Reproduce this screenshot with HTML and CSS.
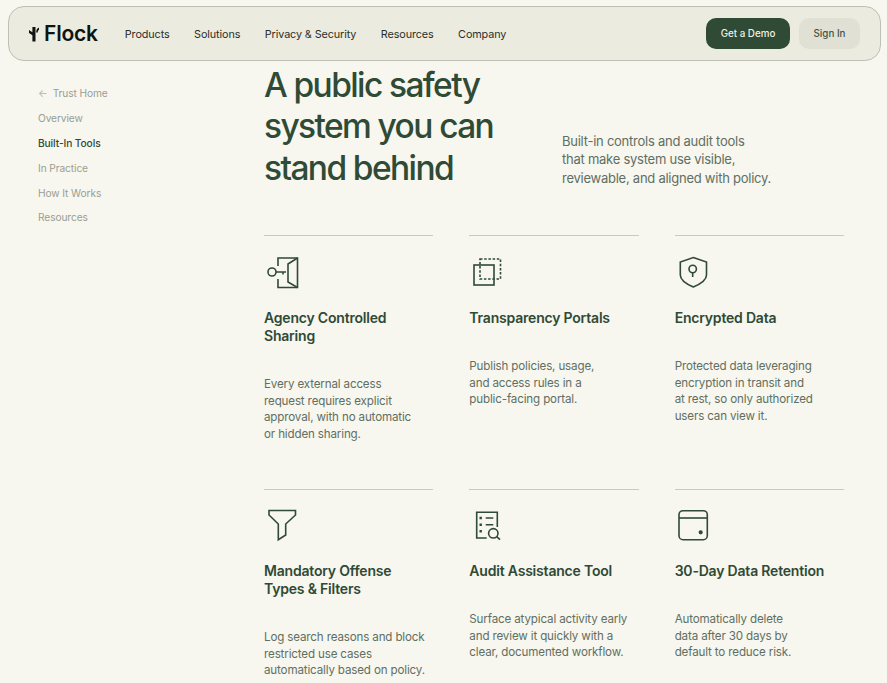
FILE: index.html
```html
<!DOCTYPE html>
<html>
  <head>
    <title>Flock Trust - Built-In Tools</title>
    <link rel="stylesheet" href="styles.css">
  </head>
  <body>
    <header class="site-nav">
      <a class="site-logo" href="#">
        <svg class="site-logo-mark" viewBox="0 0 10 16" width="10" height="16">
          <path d="M3.4 1h3.100v14.500H3.400V9.200L0 6.900V4l3.400 2.200z" />
          <path d="M7.200 6.400c0-2.700 0.900-4.300 2.800-4.900v2.200c-0.800 0.400-1.200 1.200-1.200 2.700z" />
        </svg>
        Flock
      </a>
      <nav class="site-links">
        <a href="#">Products</a>
        <a href="#">Solutions</a>
        <a href="#">Privacy &amp; Security</a>
        <a href="#">Resources</a>
        <a href="#">Company</a>
      </nav>
      <div class="site-actions">
        <a class="btn btn-primary" href="#">Get a Demo</a>
        <a class="btn btn-muted" href="#">Sign In</a>
      </div>
    </header>

    <div class="layout">
      <aside class="side-nav">
        <a href="#"><span class="side-arrow">←</span>Trust Home</a>
        <a href="#">Overview</a>
        <a href="#" class="active">Built-In Tools</a>
        <a href="#">In Practice</a>
        <a href="#">How It Works</a>
        <a href="#">Resources</a>
      </aside>

      <main class="content">
        <section class="hero">
          <h1>A public safety<br>system you can<br>stand behind</h1>
          <p>Built-in controls and audit tools<br>that make system use visible,<br>reviewable, and aligned with policy.</p>
        </section>

        <section class="tools">
          <article class="tool">
            <svg class="tool-icon" viewBox="0 0 36 36">
              <circle cx="8" cy="17" r="4" />
              <path d="M12 17h10M19 17v2.500" />
              <path d="M14 11V3h19.500v29.500H14V24" />
              <path d="M33.500 3L24 9v18l9.500 5.500" />
            </svg>
            <h2>Agency Controlled<br>Sharing</h2>
            <p>Every external access<br>request requires explicit<br>approval, with no automatic<br>or hidden sharing.</p>
          </article>
          <article class="tool">
            <svg class="tool-icon" viewBox="0 0 36 36">
              <rect x="11" y="4" width="20.500" height="20" stroke-dasharray="2.500 1.700" />
              <rect x="5" y="10" width="20" height="20" />
            </svg>
            <h2>Transparency Portals</h2>
            <p>Publish policies, usage,<br>and access rules in a<br>public-facing portal.</p>
          </article>
          <article class="tool">
            <svg class="tool-icon" viewBox="0 0 36 36">
              <path d="M18.300 2.500L31.500 7v13c0 5-6 9-13.200 12-7-3-13-7-13-12V7z" />
              <circle cx="17.700" cy="14" r="3.700" />
              <path d="M17.700 17.700V22" />
            </svg>
            <h2>Encrypted Data</h2>
            <p>Protected data leveraging<br>encryption in transit and<br>at rest, so only authorized<br>users can view it.</p>
          </article>
          <article class="tool">
            <svg class="tool-icon" viewBox="0 0 36 36">
              <path d="M5 2.500h26.500V7L21.700 16v11l-7.400 4.700V16L5 7z" />
            </svg>
            <h2>Mandatory Offense<br>Types &amp; Filters</h2>
            <p>Log search reasons and block<br>restricted use cases<br>automatically based on policy.</p>
          </article>
          <article class="tool">
            <svg class="tool-icon" viewBox="0 0 36 36">
              <path d="M28.300 19V4.300H7.700V30h10" />
              <path d="M16.700 10h7.600M16.700 16.700h7.600" />
              <path class="tool-icon-dots" d="M10.500 10h2.400M10.500 16.700h2.400M10.500 23.300h2.400" />
              <circle cx="24.300" cy="25.300" r="4.700" />
              <path d="M27.700 28.700L31 31.700" />
            </svg>
            <h2>Audit Assistance Tool</h2>
            <p>Surface atypical activity early<br>and review it quickly with a<br>clear, documented workflow.</p>
          </article>
          <article class="tool">
            <svg class="tool-icon" viewBox="0 0 36 36">
              <rect x="4" y="2.700" width="28.300" height="29" rx="4" />
              <path d="M4 10h28.300" />
              <circle class="tool-icon-dot" cx="25.700" cy="24.300" r="1.300" />
            </svg>
            <h2>30-Day Data Retention</h2>
            <p>Automatically delete<br>data after 30 days by<br>default to reduce risk.</p>
          </article>
        </section>
      </main>
    </div>
  </body>
</html>
```
FILE: styles.css
```css
* {
  box-sizing: border-box;
}

html,
body {
  height: 683px;
  overflow: hidden;
}

body {
  margin: 0;
  background: #f7f6ef;
  color: #2f4a35;
  font-family: Inter, "Liberation Sans", sans-serif;
}

a {
  color: inherit;
  text-decoration: none;
}

/* Top nav */
.site-nav {
  display: flex;
  align-items: center;
  height: 55px;
  margin: 6px 6px 0 8px;
  padding: 0 21px 0 20px;
  background: #ecebe0;
  border: 1px solid #bcc0b5;
  border-radius: 16px;
}

.site-logo {
  display: flex;
  align-items: center;
  gap: 5px;
  margin-right: 27px;
  color: #10140f;
  font-size: 21px;
  font-weight: 600;
  letter-spacing: -0.2px;
}

.site-logo-mark {
  fill: #10140f;
}

.site-links {
  display: flex;
  gap: 24.5px;
  padding-top: 2px;
  color: #2a2f29;
  font-size: 10.8px;
  letter-spacing: -0.1px;
}

.site-actions {
  display: flex;
  gap: 9px;
  margin-left: auto;
  margin-right: -1px;
  font-size: 9.8px;
  font-weight: 500;
}

.btn {
  display: flex;
  align-items: center;
  justify-content: center;
  height: 31px;
  border-radius: 10px;
}

.btn-primary {
  width: 84px;
  background: #2f4a35;
  color: #eef0e6;
}

.btn-muted {
  width: 61px;
  background: #e1e0d5;
  color: #3f5545;
}

/* Page layout */
.layout {
  display: flex;
  padding-right: 43px;
}

.side-nav {
  display: flex;
  flex: none;
  flex-direction: column;
  gap: 10.8px;
  width: 264px;
  padding: 25.4px 0 0 38px;
  color: #9a9e93;
  font-size: 10.2px;
  line-height: 14px;
  letter-spacing: -0.1px;
}

.side-nav .active {
  color: #2f4a35;
  font-weight: 500;
}

.side-arrow {
  margin-right: 5px;
  color: #b0b3a8;
}

.content {
  flex: 1;
}

.hero {
  display: flex;
  align-items: flex-end;
  height: 174.45px;
  padding-bottom: 45.95px;
}

.hero h1 {
  width: 298px;
  margin: 0;
  font-size: 33.5px;
  font-weight: 500;
  line-height: 41.6px;
  letter-spacing: -1.6px;
}

.hero p {
  margin: 0 0 2.2px;
  color: #5f6f62;
  font-size: 13px;
  line-height: 18.5px;
  letter-spacing: -0.25px;
}

/* Tool cards */
.tools {
  display: grid;
  grid-template-columns: repeat(3, 1fr);
  grid-template-rows: 253.4px auto;
  column-gap: 36px;
}

.tool {
  padding-top: 18.6px;
  border-top: 1px solid #c9cbc0;
}

.tool-icon {
  display: block;
  width: 36px;
  height: 36px;
  fill: none;
  stroke: #2f4a35;
  stroke-width: 1.6;
}

.tool-icon-dots {
  stroke-width: 2.6;
}

.tool-icon-dot {
  fill: #2f4a35;
}

.tool h2 {
  margin: 18px 0 31px;
  font-size: 14px;
  font-weight: 600;
  line-height: 18px;
  letter-spacing: -0.2px;
}

.tool p {
  margin: 0;
  color: #5f6f62;
  font-size: 11.6px;
  line-height: 16.5px;
  letter-spacing: -0.15px;
}
```
